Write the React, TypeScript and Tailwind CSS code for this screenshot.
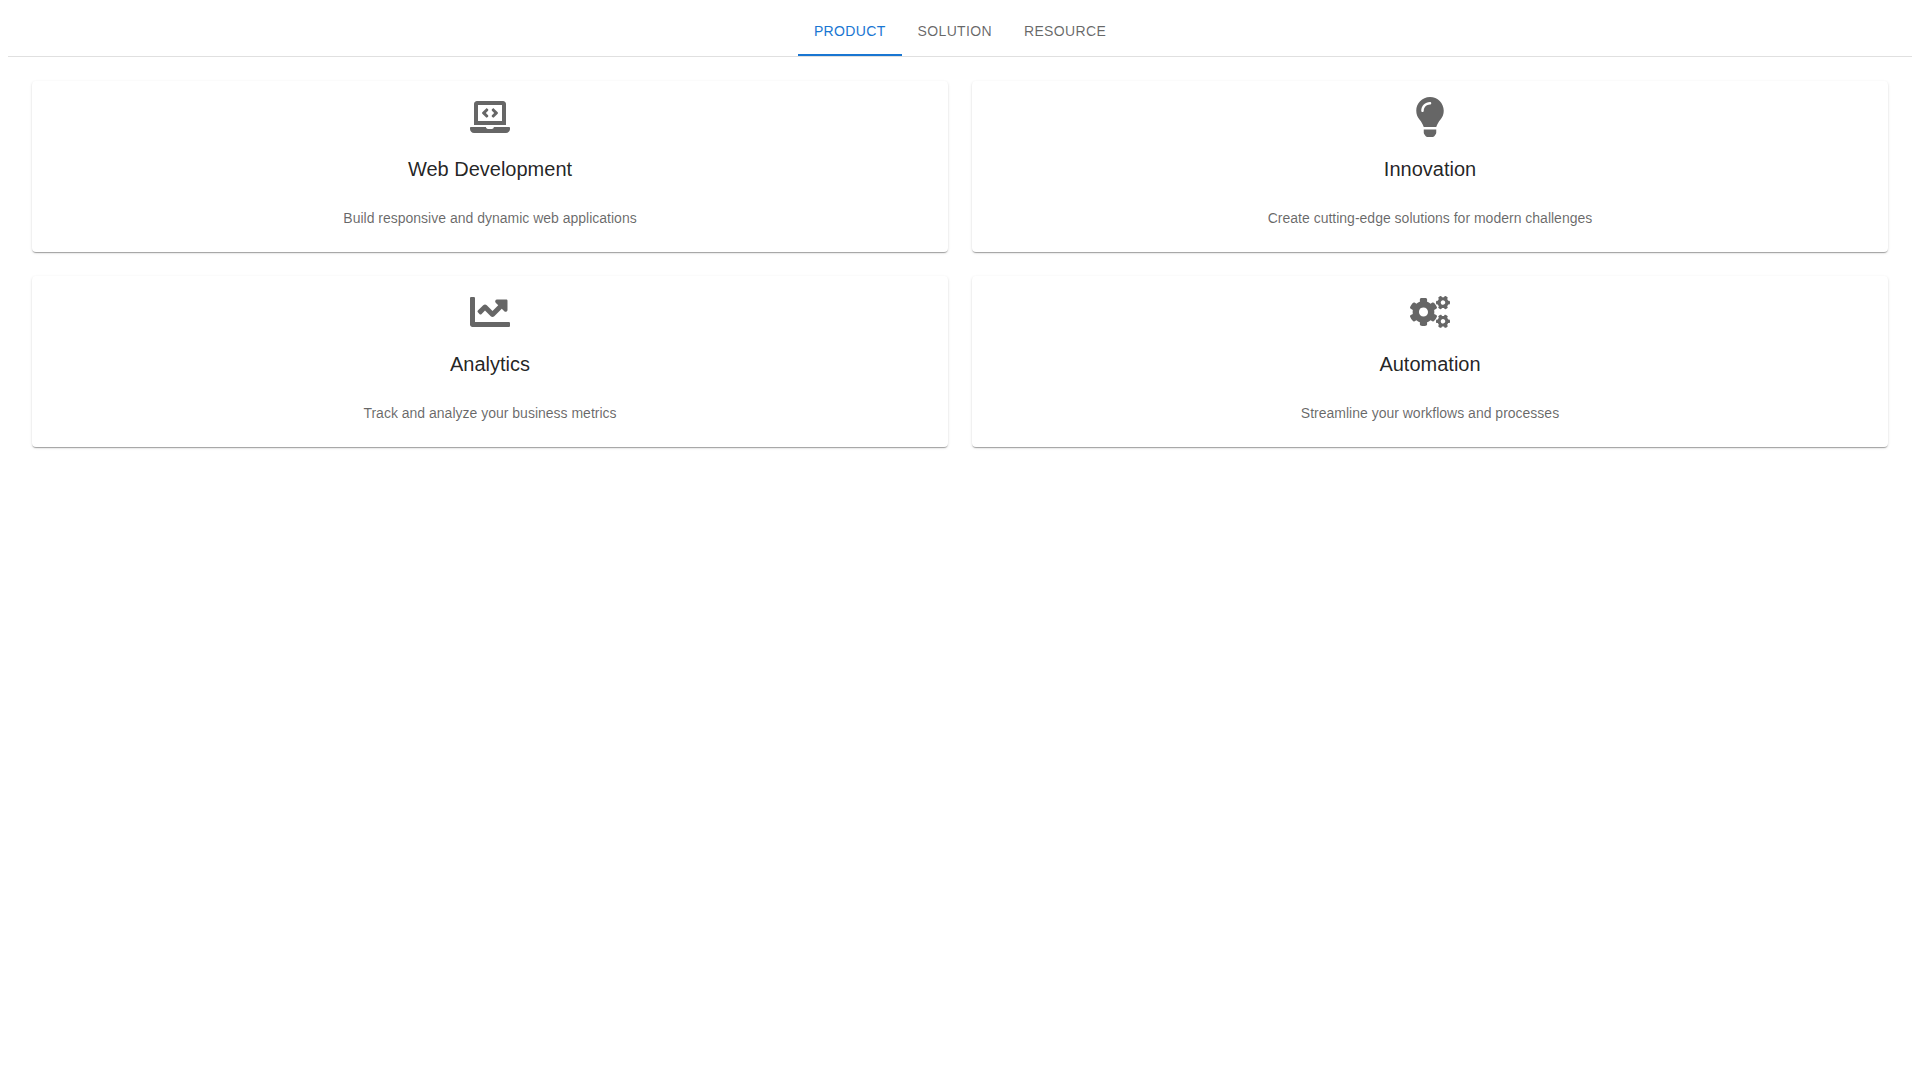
import { useState } from 'react';
import { FaChartLine, FaCogs, FaLaptopCode, FaLightbulb } from 'react-icons/fa';

const TABS = ['Product', 'Solution', 'Resource'];

const cards = [
    {
        icon: FaLaptopCode,
        title: 'Web Development',
        description: 'Build responsive and dynamic web applications',
    },
    {
        icon: FaLightbulb,
        title: 'Innovation',
        description: 'Create cutting-edge solutions for modern challenges',
    },
    {
        icon: FaChartLine,
        title: 'Analytics',
        description: 'Track and analyze your business metrics',
    },
    {
        icon: FaCogs,
        title: 'Automation',
        description: 'Streamline your workflows and processes',
    },
];

export default function App() {
    const [active, setActive] = useState(TABS[0]);

    return (
        <div className="p-2 font-['Liberation_Sans',Arial,sans-serif]">
            <div role="tablist" aria-label="Sections" className="flex justify-center border-b border-black/12">
                {TABS.map((tab) => (
                    <button
                        key={tab}
                        type="button"
                        role="tab"
                        aria-selected={active === tab}
                        onClick={() => setActive(tab)}
                        className={`h-12 min-w-[90px] px-4 border-b-2 text-sm font-medium tracking-wide uppercase cursor-pointer ${active === tab ? 'border-[#1976d2] text-[#1976d2]' : 'border-transparent text-black/60'}`}
                    >
                        {tab}
                    </button>
                ))}
            </div>

            <main className="grid grid-cols-1 md:grid-cols-2 gap-6 p-6">
                {cards.map((card) => {
                    const Icon = card.icon;
                    return (
                        <section
                            key={card.title}
                            className="flex flex-col items-center px-4 pt-4 pb-6 rounded-sm bg-white text-center shadow-[0_2px_1px_-1px_rgba(0,0,0,0.2),0_1px_1px_0_rgba(0,0,0,0.14),0_1px_3px_0_rgba(0,0,0,0.12)]"
                        >
                            <Icon className="w-10 h-10 text-black/60" />
                            <h2 className="mt-4 text-xl leading-8 font-medium text-black/87">{card.title}</h2>
                            <p className="mt-[23px] text-sm leading-5 text-black/60">{card.description}</p>
                        </section>
                    );
                })}
            </main>
        </div>
    );
}
